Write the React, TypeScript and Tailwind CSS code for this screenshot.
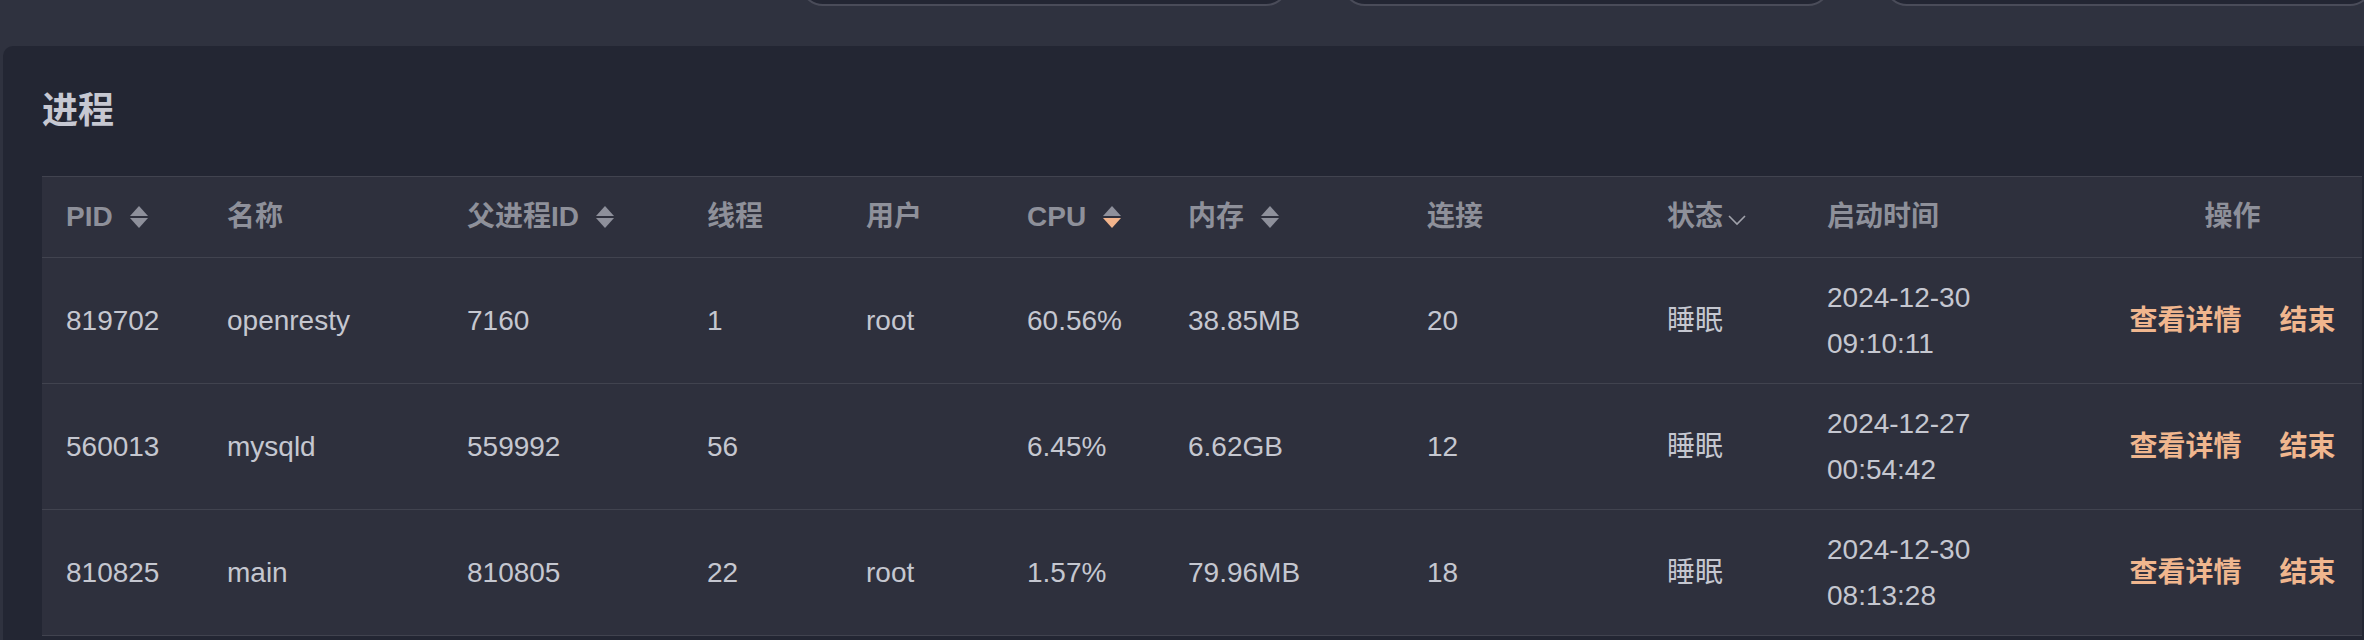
import React from "react";

const cols =
  "grid grid-cols-[161px_240px_240px_159px_161px_161px_239px_240px_160px_300px_1fr]";

function SortIcon({ active }: { active?: "up" | "down" }) {
  return (
    <svg width="20" height="24" viewBox="0 0 20 24" className="ml-[16px] shrink-0">
      <path d="M10 1 L19 11 L1 11 Z" fill={active === "up" ? "#f2b48c" : "#8e909b"} />
      <path d="M1 13 L19 13 L10 23 Z" fill={active === "down" ? "#f2b48c" : "#8e909b"} />
    </svg>
  );
}

function Chevron() {
  return (
    <svg width="20" height="12" viewBox="0 0 20 12" className="ml-[4px] mt-[6px] shrink-0">
      <polyline points="2,2 10,10 18,2" fill="none" stroke="#a0a2ab" strokeWidth="1.6" />
    </svg>
  );
}

type Row = {
  pid: string;
  name: string;
  ppid: string;
  threads: string;
  user: string;
  cpu: string;
  mem: string;
  conn: string;
  status: string;
  date: string;
  time: string;
};

const rows: Row[] = [
  { pid: "819702", name: "openresty", ppid: "7160", threads: "1", user: "root", cpu: "60.56%", mem: "38.85MB", conn: "20", status: "睡眠", date: "2024-12-30", time: "09:10:11" },
  { pid: "560013", name: "mysqld", ppid: "559992", threads: "56", user: "", cpu: "6.45%", mem: "6.62GB", conn: "12", status: "睡眠", date: "2024-12-27", time: "00:54:42" },
  { pid: "810825", name: "main", ppid: "810805", threads: "22", user: "root", cpu: "1.57%", mem: "79.96MB", conn: "18", status: "睡眠", date: "2024-12-30", time: "08:13:28" },
];

export default function App() {
  return (
    <div className="w-[2364px] h-[640px] overflow-hidden bg-[#2f323f] font-['Liberation_Sans','Noto_Sans_CJK_SC',sans-serif]">
      <div className="h-[46px] flex pl-[800px] gap-[53px]">
        <div className="w-[489px] h-[46px] -mt-[40px] shrink-0 rounded-[32px] border-2 border-[#4a4c59] bg-[#232633]" />
        <div className="w-[489px] h-[46px] -mt-[40px] shrink-0 rounded-[32px] border-2 border-[#4a4c59] bg-[#232633]" />
        <div className="w-[489px] h-[46px] -mt-[40px] shrink-0 rounded-[32px] border-2 border-[#4a4c59] bg-[#232633]" />
      </div>
      <div className="ml-[3px] h-[594px] rounded-tl-[10px] bg-[#232633] pt-[40px] pl-[39px] pr-[2px]">
        <h2 className="text-[36px] leading-[50px] font-bold text-[#c6c8d2]">进程</h2>
        <div className="mt-[40px] bg-[#2e303d] border-t border-[#41434f]">
          <div className={`${cols} h-[81px] items-center border-b border-[#41434f] text-[28px] font-bold text-[#8e909a]`}>
            <div className="pl-[24px] flex items-center">PID<SortIcon /></div>
            <div className="pl-[24px]">名称</div>
            <div className="pl-[24px] flex items-center">父进程ID<SortIcon /></div>
            <div className="pl-[24px]">线程</div>
            <div className="pl-[24px]">用户</div>
            <div className="pl-[24px] flex items-center">CPU<SortIcon active="down" /></div>
            <div className="pl-[24px] flex items-center">内存<SortIcon /></div>
            <div className="pl-[24px]">连接</div>
            <div className="pl-[24px] flex items-center">状态<Chevron /></div>
            <div className="pl-[24px]">启动时间</div>
            <div className="text-center">操作</div>
          </div>
          {rows.map((r) => (
            <div
              key={r.pid}
              className={`${cols} h-[126px] items-center border-b border-[#41434f] text-[28px] text-[#c5c7d0]`}
            >
              <div className="pl-[24px]">{r.pid}</div>
              <div className="pl-[24px]">{r.name}</div>
              <div className="pl-[24px]">{r.ppid}</div>
              <div className="pl-[24px]">{r.threads}</div>
              <div className="pl-[24px]">{r.user}</div>
              <div className="pl-[24px]">{r.cpu}</div>
              <div className="pl-[24px]">{r.mem}</div>
              <div className="pl-[24px]">{r.conn}</div>
              <div className="pl-[24px]">{r.status}</div>
              <div className="pl-[24px] leading-[46px]">
                <div>{r.date}</div>
                <div>{r.time}</div>
              </div>
              <div className="flex justify-center gap-[38px] font-semibold text-[#f0b68e]">
                <span>查看详情</span>
                <span>结束</span>
              </div>
            </div>
          ))}
        </div>
      </div>
    </div>
  );
}
